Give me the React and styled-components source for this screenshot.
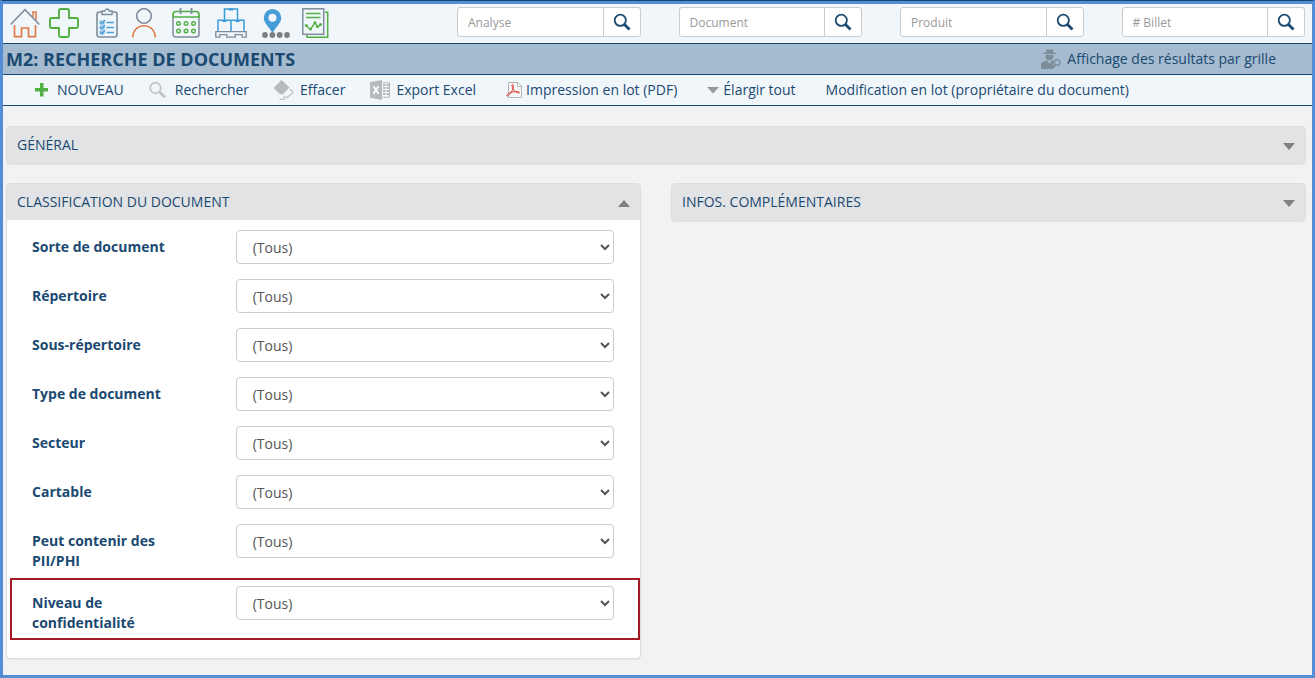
import styled, { createGlobalStyle } from "styled-components";
import { useState } from "react";

const searches = ["Analyse", "Document", "Produit", "# Billet"];

const filters = [
  { id: "sorte", label: "Sorte de document" },
  { id: "repertoire", label: "Répertoire" },
  { id: "sousRepertoire", label: "Sous-répertoire" },
  { id: "type", label: "Type de document" },
  { id: "secteur", label: "Secteur" },
  { id: "cartable", label: "Cartable" },
  { id: "pii", label: "Peut contenir des PII/PHI" },
  { id: "niveau", label: "Niveau de confidentialité", highlight: true },
];

const HomeIcon = () => (
  <svg width="30" height="30" viewBox="0 0 30 30" fill="none" strokeWidth="1.5">
    <path d="M23 9V4h3v8" stroke="#e07b45" />
    <path d="M4.5 17v11.7h7V20h7v8.700h7V17" stroke="#e07b45" strokeWidth="1.7" />
    <path d="M.6 16.500 15 1.700l14.400 14.800" stroke="#7d8d9b" />
  </svg>
);

const PlusIcon = () => (
  <svg width="30" height="30" viewBox="0 0 30 30" fill="none">
    <path
      d="M11.500 1h7q1.500 0 1.500 1.500V10h7.500q1.500 0 1.500 1.500v7q0 1.500-1.500 1.500H20v7.500q0 1.500-1.500 1.500h-7q-1.500 0-1.500-1.500V20H2.500Q1 20 1 18.500v-7Q1 10 2.500 10H10V2.500Q10 1 11.500 1z"
      stroke="#52b043"
      strokeWidth="1.900"
    />
  </svg>
);

const ClipboardIcon = () => (
  <svg width="22" height="30" viewBox="0 0 22 30" fill="none">
    <rect x="1" y="4" width="20" height="25" rx="2.500" stroke="#7d8d9b" strokeWidth="1.600" />
    <path d="M6 6.500V3h3a2 2 0 0 1 4 0h3v3.500z" fill="#f1f6fb" stroke="#7d8d9b" strokeWidth="1.300" />
    <path d="M10.500 14.500H18M10.500 19.500H18M10.500 24.500H18" stroke="#4a9fd8" strokeWidth="1.300" />
    <path d="M4 13h4v3H4zM4 18h4v3H4zM4 23h4v3H4z" stroke="#4a9fd8" strokeWidth=".800" />
    <path d="m4.500 14 1.500 1.500L9 12M4.500 19 6 20.500 9 17M4.500 24 6 25.500 9 22" stroke="#4a9fd8" strokeWidth="1.300" />
  </svg>
);

const UserIcon = () => (
  <svg width="24" height="30" viewBox="0 0 24 30" fill="none" strokeWidth="1.600">
    <circle cx="12" cy="8" r="7.300" stroke="#7d8d9b" />
    <path d="M.800 29.500C.800 22.500 5.500 17.700 12 17.700S23.200 22.500 23.200 29.500" stroke="#e07b45" />
  </svg>
);

const CalendarIcon = () => (
  <svg width="28" height="30" viewBox="0 0 28 30" fill="none">
    <path d="M1 9v17q0 3 3 3h20q3 0 3-3V9" stroke="#7d8d9b" strokeWidth="1.500" />
    <path d="M1 9V6.500q0-3 3-3h20q3 0 3 3V9z" stroke="#52b043" strokeWidth="1.700" />
    <path d="M8.500 0v6M19.500 0v6" stroke="#7d8d9b" strokeWidth="1.800" />
    <g stroke="#52b043" strokeWidth="1.400">
      <circle cx="6.500" cy="15.500" r="1.800" />
      <circle cx="14" cy="15.500" r="1.800" />
      <circle cx="21.500" cy="15.500" r="1.800" />
      <circle cx="6.500" cy="23" r="1.800" />
      <circle cx="14" cy="23" r="1.800" />
      <circle cx="21.500" cy="23" r="1.800" />
    </g>
  </svg>
);

const BoxesIcon = () => (
  <svg width="32" height="30" viewBox="0 0 32 30" fill="none">
    <g stroke="#3a9bd8" strokeWidth="1.500">
      <path d="M9.500 12V1h13v11M3 23V12.300h26V23M16 12.300V23" />
      <path d="M14 1.500h4M7.500 13h4M20.500 13h4" strokeWidth="2" />
    </g>
    <path d="M.800 23.700h30.400v5.500h-4v-2.500h-7v2.500h-8.400v-2.500h-7v2.500h-4z" stroke="#7d8d9b" strokeWidth="1.300" />
  </svg>
);

const PinIcon = () => (
  <svg width="28" height="30" viewBox="0 0 28 30">
    <path
      fillRule="evenodd"
      d="M10.500 1a8.700 8.700 0 0 1 8.700 8.700c0 5.300-4.500 8-8.700 15.300C6.300 17.700 1.800 15 1.800 9.700A8.700 8.700 0 0 1 10.500 1zm0 4.700a4 4 0 1 0 0 8 4 4 0 0 0 0-8z"
      fill="#459cd7"
    />
    <g fill="#7f7f7f">
      <circle cx="3" cy="27" r="2.900" />
      <circle cx="10.400" cy="27" r="2.900" />
      <circle cx="17.700" cy="27" r="2.900" />
      <circle cx="25" cy="27" r="2.900" />
    </g>
  </svg>
);

const ReportIcon = () => (
  <svg width="27" height="30" viewBox="0 0 27 30" fill="none">
    <path d="M23 4.300h2.700v25H5V27" stroke="#52b043" strokeWidth="1.500" />
    <rect x=".800" y=".800" width="20.900" height="25.500" stroke="#7d8d9b" strokeWidth="1.500" />
    <path d="M4 5.500h14.500M4 9.500h14.500" stroke="#52b043" strokeWidth="1.500" />
    <path d="m4 17.500 4.500 4 4.500-7 2.500 4.500 3.500-2.500" stroke="#52b043" strokeWidth="1.400" />
    <g fill="#52b043">
      <circle cx="4.300" cy="17.500" r="1.500" />
      <circle cx="8.500" cy="21" r="1.500" />
      <circle cx="13" cy="14.700" r="1.500" />
      <circle cx="15.500" cy="18.500" r="1.500" />
      <circle cx="18.500" cy="16.500" r="1.500" />
    </g>
  </svg>
);

const SearchIcon = () => (
  <svg width="18" height="18" viewBox="0 0 18 18" fill="none" stroke="#1a4971">
    <circle cx="7.300" cy="7.300" r="5.600" strokeWidth="1.800" />
    <path d="m11.500 11.500 5 5" strokeWidth="2.900" />
  </svg>
);

const AgentIcon = () => (
  <svg width="20" height="20" viewBox="0 0 20 20" fill="#7d8d99">
    <path d="M4.500 3.700 5.300.600h6.600l.800 3.100 2.300.300v1H2V4z" />
    <path d="M4.500 5.800h8V8.500l-2 2.700h-4l-2-2.700z" />
    <path d="M0 20v-4.500Q0 13 3 12.500l3-1 2.500 3 2.500-3 2 .5-1 4 1.500 1L11 20z" />
    <g fill="none" stroke="#7d8d99">
      <circle cx="16.200" cy="13.500" r="2.800" strokeWidth="1.300" />
      <path d="m14.500 16-3 3.500" strokeWidth="1.800" />
    </g>
  </svg>
);

const AddIcon = () => (
  <svg width="20" height="20" viewBox="0 0 20 20">
    <path d="M9 3h3.500v5H17v3.500h-4.500v5H9v-5H4V8h5z" fill="#52b043" />
  </svg>
);

const FindIcon = () => (
  <svg width="20" height="20" viewBox="0 0 20 20" fill="none" stroke="#bfc3c6">
    <circle cx="6.500" cy="8" r="5.300" strokeWidth="1.700" />
    <path d="m10.800 12.300 5 5" strokeWidth="2.800" />
  </svg>
);

const EraserIcon = () => (
  <svg width="20" height="20" viewBox="0 0 20 20" fill="none">
    <path d="M7.500 0 15.500 7.500 8.500 14.500 6 14 0 8.500v-1z" fill="#b7babc" />
    <path d="m15.800 9 3 2.500v1.500L13 17.500H11L9.500 16" stroke="#bfc3c6" strokeWidth="1.400" />
    <path d="M5.500 19.300h5.500" stroke="#bfc3c6" strokeWidth="1.400" />
  </svg>
);

const ExcelIcon = () => (
  <svg width="20" height="20" viewBox="0 0 20 20">
    <path d="M0 2.200 12 0v20L0 17.800z" fill="#b7babc" />
    <path d="M12.500 2.700h7v14.600h-7" fill="none" stroke="#b7babc" />
    <path d="M13 5h2.500M16.500 5H19M13 8h2.500M16.500 8H19M13 11h2.500M16.500 11H19M13 14h2.500M16.500 14H19" stroke="#b7babc" strokeWidth="2" />
    <path d="m3.500 6.300 5 7.500M8.500 6.300l-5 7.500" stroke="#fff" strokeWidth="1.900" />
  </svg>
);

const PdfIcon = () => (
  <svg width="16" height="16" viewBox="0 0 16 16" fill="none">
    <path d="M2.500.500h9.500l3.500 3.500v11.500h-13z" fill="#f7f7f7" stroke="#b5b8ba" />
    <path d="M11.500.500v4h4" stroke="#b5b8ba" />
    <path d="M6.500 2.300c1.300 0 1 2.500.300 4.700S3.500 13.700 1.500 14c-1.500.200-1-1.700 1.500-2.800s6-2 8.500-1.700c2.800.300 2.500 2 .500 1.500C9 10.200 6.200 6.500 6 4c-.100-1 0-1.700.500-1.700z" stroke="#dc4a42" />
  </svg>
);

const CaretIcon = () => (
  <svg width="12" height="8" viewBox="0 0 12 8">
    <path d="M0 1h12L6 7.500z" fill="#999" />
  </svg>
);

const shortcuts = [
  { name: "Accueil", icon: HomeIcon, space: 9 },
  { name: "Ajouter", icon: PlusIcon, space: 17 },
  { name: "Tâches", icon: ClipboardIcon, space: 14 },
  { name: "Utilisateur", icon: UserIcon, space: 16 },
  { name: "Calendrier", icon: CalendarIcon, space: 15 },
  { name: "Inventaire", icon: BoxesIcon, space: 15 },
  { name: "Emplacements", icon: PinIcon, space: 12 },
  { name: "Rapports", icon: ReportIcon, space: 0 },
];

function Panel({ title, defaultOpen = false, children }) {
  const [open, setOpen] = useState(defaultOpen);

  return (
    <PanelBox>
      <PanelHeader type="button" aria-expanded={open} onClick={() => setOpen(!open)}>
        {title}
        <Triangle $up={open} />
      </PanelHeader>
      {open && <PanelBody>{children}</PanelBody>}
    </PanelBox>
  );
}

function App() {
  return (
    <Page>
      <GlobalStyle />
      <TopBar>
        <Shortcuts>
          {shortcuts.map(({ name, icon: Icon, space }) => (
            <Shortcut key={name} href="#" aria-label={name} $space={space}>
              <Icon />
            </Shortcut>
          ))}
        </Shortcuts>
        <Searches>
          {searches.map((name) => (
            <SearchGroup key={name}>
              <SearchInput type="text" placeholder={name} aria-label={name} />
              <SearchButton type="button" aria-label={`Rechercher ${name}`}>
                <SearchIcon />
              </SearchButton>
            </SearchGroup>
          ))}
        </Searches>
      </TopBar>
      <TitleBar>
        <Title>M2: RECHERCHE DE DOCUMENTS</Title>
        <ToolLink href="#" $gap={6}>
          <AgentIcon />
          Affichage des résultats par grille
        </ToolLink>
      </TitleBar>
      <Toolbar>
        <ToolGroup $gap={25}>
          <ToolLink href="#" $gap={6}><AddIcon />NOUVEAU</ToolLink>
          <ToolLink href="#" $gap={6}><FindIcon />Rechercher</ToolLink>
          <ToolLink href="#" $gap={6}><EraserIcon />Effacer</ToolLink>
          <ToolLink href="#" $gap={6}><ExcelIcon />Export Excel</ToolLink>
        </ToolGroup>
        <ToolGroup $gap={30}>
          <ToolLink href="#" $gap={4}><PdfIcon />Impression en lot (PDF)</ToolLink>
          <ToolLink href="#" $gap={4}><CaretIcon />Élargir tout</ToolLink>
          <ToolLink href="#" $gap={4}>Modification en lot (propriétaire du document)</ToolLink>
        </ToolGroup>
      </Toolbar>
      <Content>
        <Panel title="GÉNÉRAL" />
        <Columns>
          <Panel title="CLASSIFICATION DU DOCUMENT" defaultOpen>
            {filters.map((filter) => (
              <FilterRow key={filter.id} $highlight={filter.highlight}>
                <Label htmlFor={filter.id}>{filter.label}</Label>
                <Select id={filter.id}>
                  <option>(Tous)</option>
                </Select>
              </FilterRow>
            ))}
          </Panel>
          <Panel title="INFOS. COMPLÉMENTAIRES" />
        </Columns>
      </Content>
    </Page>
  );
}

const GlobalStyle = createGlobalStyle`
  * {
    box-sizing: border-box;
  }
  body {
    margin: 0;
    font-family: "Open Sans", sans-serif;
    font-size: 14px;
    line-height: 20px;
    color: #1a4971;
  }
  input, select, button {
    font-family: inherit;
  }
  svg {
    display: block;
    flex-shrink: 0;
  }
`;

const Page = styled.div`
  min-height: 100vh;
  background-color: #f2f2f2;
  border: 3px solid #538dd5;
  border-top: 1px solid #144673;
`;
const TopBar = styled.header`
  display: flex;
  background-color: #f1f6fb;
  border-top: 3px solid #538dd5;
  border-bottom: 1px solid #144673;
`;
const Shortcuts = styled.nav`
  flex: 0 0 454px;
  display: flex;
  align-items: center;
  padding: 3px 7px 5px;
`;
const Shortcut = styled.a`
  margin-right: ${(props) => props.$space}px;
`;
const Searches = styled.div`
  flex: 1;
  min-width: 0;
  display: flex;
  gap: 38px;
  padding: 3px 7px 6px 0;
`;
const SearchGroup = styled.div`
  flex: 1;
  min-width: 0;
  display: flex;
  height: 30px;
  background-color: #fff;
  border: 1px solid #ccc;
  border-radius: 3px;
`;
const SearchInput = styled.input`
  flex: 1;
  min-width: 0;
  padding: 0 10px;
  border: none;
  background: none;
  font-size: 12px;
  color: #555;

  &::placeholder {
    color: #999;
  }
`;
const SearchButton = styled.button`
  flex: 0 0 37px;
  padding: 0 0 0 9px;
  border: none;
  border-left: 1px solid #ccc;
  background: none;
  cursor: pointer;
`;
const TitleBar = styled.div`
  display: flex;
  align-items: center;
  justify-content: space-between;
  height: 31px;
  padding: 0 36px 0 3px;
  background-color: #a5bbcf;
  border-bottom: 1px solid #144673;
`;
const Title = styled.h1`
  margin: 0;
  font-size: 18px;
  line-height: 20px;
  font-weight: 700;
`;
const Toolbar = styled.div`
  display: flex;
  align-items: center;
  gap: 30px;
  height: 31px;
  padding-left: 28px;
  background-color: #f1f6fb;
  border-bottom: 1px solid #144673;
`;
const ToolGroup = styled.div`
  display: flex;
  gap: ${(props) => props.$gap}px;
`;
const ToolLink = styled.a`
  display: flex;
  align-items: center;
  gap: ${(props) => props.$gap}px;
  color: inherit;
  text-decoration: none;
  white-space: nowrap;
`;
const Content = styled.main`
  padding: 20px 6px 16px 3px;
`;
const Columns = styled.div`
  display: grid;
  grid-template-columns: 1fr 1fr;
  align-items: start;
  gap: 30px;
  margin-top: 19px;
`;
const PanelBox = styled.section`
  background-color: #fff;
  border: 1px solid #ddd;
  border-radius: 4px;
  box-shadow: 0 1px 1px rgba(0, 0, 0, 0.05);
`;
const PanelHeader = styled.button`
  display: flex;
  align-items: center;
  justify-content: space-between;
  width: 100%;
  height: 36px;
  padding: 0 10px 2px;
  border: none;
  border-radius: 3px 3px 0 0;
  background-color: #e2e3e5;
  font-size: 14px;
  color: inherit;
  cursor: pointer;
`;
const Triangle = styled.span`
  margin-top: 4px;
  border: 6px solid transparent;
  border-width: ${(props) => (props.$up ? "0 6px 7px" : "7px 6px 0")};
  border-bottom-color: ${(props) => (props.$up ? "#808080" : "transparent")};
  border-top-color: ${(props) => (props.$up ? "transparent" : "#808080")};
`;
const PanelBody = styled.div`
  padding: 10px 0;
`;
const FilterRow = styled.div`
  position: relative;
  display: grid;
  grid-template-columns: 35fr 65fr;
  align-items: start;
  padding: 0 26px 0 25px;
  margin-bottom: 15px;

  &::after {
    content: "";
    display: ${(props) => (props.$highlight ? "block" : "none")};
    position: absolute;
    inset: -8px 0 -7px 3px;
    border: 2px solid #a11a24;
    pointer-events: none;
  }
`;
const Label = styled.label`
  padding: 7px 40px 0 0;
  font-weight: 700;
`;
const Select = styled.select`
  width: 100%;
  height: 34px;
  padding: 6px 12px;
  border: 1px solid #ccc;
  border-radius: 4px;
  background-color: #fff;
  font-size: 14px;
  color: #555;
`;

export default App;
